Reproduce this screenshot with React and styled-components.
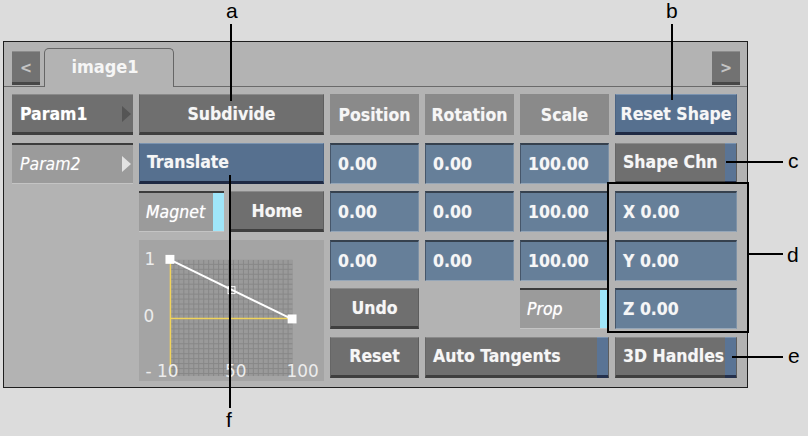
import React from 'react'
import styled, { createGlobalStyle, css } from 'styled-components'

//* Styles */
const Global = createGlobalStyle`
  body {
    margin: 0;
    background: #dcdcdc;
    font-family: "DejaVu Sans Condensed", "DejaVu Sans", sans-serif;
  }
`
const Stage = styled.div`
  position: relative;
  width: 808px;
  height: 436px;
  overflow: hidden;
  padding: 41px 0 0 3px;
  box-sizing: border-box;
`
const Panel = styled.div`
  width: 745px;
  height: 347px;
  box-sizing: border-box;
  border: 1px solid #1e1e1e;
  background: #b3b3b3;
`
const TabBar = styled.div`
  display: flex;
  align-items: flex-end;
  height: 44px;
  padding: 0 7px 0 8px;
  border-bottom: 1px solid #6a6a6a;
  gap: 4px;
`
const NavButton = styled.div`
  width: 28px;
  height: 34px;
  margin-bottom: 1px;
  box-sizing: border-box;
  display: flex;
  align-items: center;
  justify-content: center;
  background: #727272;
  border-top: 1px solid #8c8c8c;
  border-bottom: 3px solid #474747;
  color: #c4c4c4;
  font-size: 16px;
  font-weight: bold;
  margin-left: ${(p) => (p.$right ? 'auto' : '0')};
`
const Tab = styled.div`
  width: 130px;
  height: 39px;
  margin-bottom: -1px;
  box-sizing: border-box;
  border: 1px solid #666;
  border-bottom: none;
  border-radius: 5px 5px 0 0;
  background: #b3b3b3;
  color: #f6f6f6;
  font-size: 18px;
  font-weight: bold;
  display: flex;
  align-items: center;
  justify-content: center;
  padding-right: 8px;
  padding-bottom: 3px;
`
const Body = styled.div`
  display: grid;
  grid-template-columns: 121px 185px 89px 89px 89px 122px;
  grid-template-rows: repeat(6, 41px);
  column-gap: 6px;
  row-gap: 7.5px;
  padding: 7px 0 0 8px;
`
const cell = css`
  box-sizing: border-box;
  display: flex;
  align-items: center;
  min-width: 0;
  color: #f6f6f6;
  font-size: 17.5px;
  font-weight: bold;
  white-space: nowrap;
  text-shadow: 0 0 1px rgba(255, 255, 255, 0.35);
  grid-column: ${(p) => p.$col || 'auto'};
  grid-row: ${(p) => p.$row || 'auto'};
`
const Button = styled.div`
  ${cell};
  justify-content: ${(p) => (p.$left ? 'flex-start' : 'center')};
  padding: 0 7px;
  background: ${(p) => (p.$blue ? '#56708f' : '#6f6f6f')};
  border-top: 1px solid ${(p) => (p.$blue ? '#7a93b0' : '#8a8a8a')};
  border-left: 1px solid ${(p) => (p.$blue ? '#4c6483' : '#666')};
  border-right: 1px solid ${(p) => (p.$blue ? '#4c6483' : '#5e5e5e')};
  border-bottom: 3px solid ${(p) => (p.$blue ? '#1f2a44' : '#3f3f3f')};
`
const Label = styled.div`
  ${cell};
  justify-content: center;
  background: #8a8a8a;
`
const Field = styled.div`
  ${cell};
  padding: 0 7px;
  background: #667f99;
  border-top: 2px solid #36414e;
  border-left: 1px solid #46566a;
  border-right: 1px solid #7d91a6;
  border-bottom: 1px solid #95a6b8;
`
const Menu = styled.div`
  ${cell};
  justify-content: space-between;
  padding: 0 2px 0 8px;
  background: ${(p) => (p.$active ? '#9b9b9b' : '#6f6f6f')};
  font-weight: ${(p) => (p.$active ? 'normal' : 'bold')};
  font-style: ${(p) => (p.$active ? 'italic' : 'normal')};
  color: #fff;
  border-top: ${(p) => (p.$active ? '2px solid #3c3c3c' : '1px solid #8a8a8a')};
  border-bottom: ${(p) => (p.$active ? '1px solid #c4c4c4' : '3px solid #3f3f3f')};
`
const Arrow = styled.span`
  width: 0;
  height: 0;
  border-top: 8px solid transparent;
  border-bottom: 8px solid transparent;
  border-left: 9px solid ${(p) => (p.$light ? '#e2e2e2' : '#555')};
`
const Toggle = styled.div`
  ${cell};
  padding-left: 7px;
  background: #9b9b9b;
  font-style: italic;
  font-weight: normal;
  color: #fff;
  text-shadow: 0 0 1px rgba(255, 255, 255, 0.7);
  border-top: 2px solid #3c3c3c;
  border-bottom: 1px solid #c4c4c4;
  &::after {
    content: '';
    margin-left: auto;
    align-self: stretch;
    width: ${(p) => p.$strip || 11}px;
    background: #9fe6fa;
  }
`
const StripButton = styled(Button)`
  padding-right: 0;
  justify-content: flex-start;
  &::after {
    content: '';
    margin-left: auto;
    align-self: stretch;
    flex: none;
    width: 11px;
    margin-top: -1px;
    margin-bottom: -3px;
    background: #5a7495;
    border-bottom: 3px solid #24304c;
    border-top: 1px solid #7a93b0;
  }
`
const Pair = styled.div`
  display: flex;
  gap: 6px;
  grid-column: 2;
  grid-row: 3;
  & > * {
    flex: 1;
  }
`
const Graph = styled.div`
  grid-column: 2;
  grid-row: 4 / span 3;
  margin-bottom: -3px;
  background: #a4a4a4;
  svg {
    display: block;
    width: 100%;
    height: 100%;
  }
  text {
    font-family: "DejaVu Sans", sans-serif;
    font-size: 17px;
    fill: #ececec;
  }
`
const Mark = styled.div`
  position: absolute;
  left: ${(p) => p.$x}px;
  top: ${(p) => p.$y}px;
  font-family: "Liberation Sans", Arial, sans-serif;
  font-size: 21px;
  line-height: 1;
  color: #000;
`
const Leader = styled.div`
  position: absolute;
  left: ${(p) => p.$x}px;
  top: ${(p) => p.$y}px;
  width: ${(p) => p.$w}px;
  height: ${(p) => p.$h}px;
  background: #000;
`
const Bracket = styled.div`
  position: absolute;
  left: 607px;
  top: 182px;
  width: 142px;
  height: 151px;
  box-sizing: border-box;
  border: 2px solid #000;
`

function Curve() {
  return (
    <svg viewBox="0 0 185 142">
      <defs>
        <pattern id="grid" width="5" height="5" patternUnits="userSpaceOnUse">
          <rect width="5" height="5" fill="#9a9a9a" />
          <path d="M4.5 0 V5 M0 4.5 H5" stroke="#878787" strokeWidth="1" />
        </pattern>
      </defs>
      <rect x="31" y="20" width="123" height="117" fill="url(#grid)" />
      <line x1="31" y1="20" x2="31" y2="137" stroke="#f0d35a" strokeWidth="1.5" />
      <line x1="31" y1="79" x2="154" y2="79" stroke="#f0d35a" strokeWidth="1.5" />
      <line x1="31" y1="20" x2="154" y2="80" stroke="#fff" strokeWidth="2" />
      <rect x="26" y="15" width="9" height="9" fill="#fff" />
      <rect x="149" y="75" width="9" height="9" fill="#fff" />
      <rect x="89" y="47" width="7" height="7" fill="none" stroke="#fff" strokeWidth="1" />
      <text x="5" y="25">1</text>
      <text x="4" y="83">0</text>
      <text x="6" y="138">- 10</text>
      <text x="86" y="138">50</text>
      <text x="148" y="138">100</text>
    </svg>
  )
}

export default function App() {
  return (
    <Stage>
      <Global />
      <Panel>
        <TabBar>
          <NavButton>&lt;</NavButton>
          <Tab>image1</Tab>
          <NavButton $right>&gt;</NavButton>
        </TabBar>
        <Body>
          <Menu $col={1} $row={1}>
            Param1 <Arrow />
          </Menu>
          <Button $col={2} $row={1}>Subdivide</Button>
          <Label $col={3} $row={1}>Position</Label>
          <Label $col={4} $row={1}>Rotation</Label>
          <Label $col={5} $row={1}>Scale</Label>
          <Button $col={6} $row={1} $blue>Reset Shape</Button>

          <Menu $col={1} $row={2} $active>
            Param2 <Arrow $light />
          </Menu>
          <Button $col={2} $row={2} $blue $left>Translate</Button>
          <Field $col={3} $row={2}>0.00</Field>
          <Field $col={4} $row={2}>0.00</Field>
          <Field $col={5} $row={2}>100.00</Field>
          <StripButton $col={6} $row={2}>Shape Chn</StripButton>

          <Pair>
            <Toggle>Magnet</Toggle>
            <Button>Home</Button>
          </Pair>
          <Field $col={3} $row={3}>0.00</Field>
          <Field $col={4} $row={3}>0.00</Field>
          <Field $col={5} $row={3}>100.00</Field>
          <Field $col={6} $row={3}>X 0.00</Field>

          <Graph>
            <Curve />
          </Graph>
          <Field $col={3} $row={4}>0.00</Field>
          <Field $col={4} $row={4}>0.00</Field>
          <Field $col={5} $row={4}>100.00</Field>
          <Field $col={6} $row={4}>Y 0.00</Field>

          <Button $col={3} $row={5}>Undo</Button>
          <Toggle $col={5} $row={5} $strip={9}>Prop</Toggle>
          <Field $col={6} $row={5}>Z 0.00</Field>

          <Button $col={3} $row={6}>Reset</Button>
          <StripButton $col="4 / span 2" $row={6}>Auto Tangents</StripButton>
          <StripButton $col={6} $row={6}>3D Handles</StripButton>
        </Body>
      </Panel>

      <Mark $x={226} $y={0}>a</Mark>
      <Leader $x={230} $y={24} $w={2} $h={77} />
      <Mark $x={666} $y={0}>b</Mark>
      <Leader $x={671} $y={24} $w={2} $h={76} />
      <Leader $x={726} $y={161} $w={57} $h={2} />
      <Mark $x={788} $y={150}>c</Mark>
      <Bracket />
      <Leader $x={749} $y={253} $w={34} $h={2} />
      <Mark $x={787} $y={244}>d</Mark>
      <Leader $x={732} $y={356} $w={51} $h={2} />
      <Mark $x={788} $y={345}>e</Mark>
      <Leader $x={229} $y={175} $w={2} $h={233} />
      <Mark $x={226} $y={409}>f</Mark>
    </Stage>
  )
}
